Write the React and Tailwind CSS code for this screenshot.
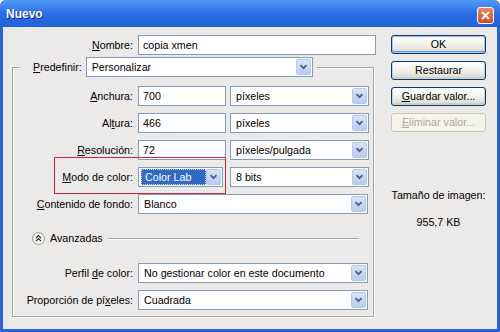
import React from 'react';

const Chevron = () => (
  <svg width="9" height="6" viewBox="0 0 9 6">
    <path d="M1.5 1.2 L4.5 4.2 L7.5 1.2" fill="none" stroke="#4D6185" strokeWidth="1.9" />
  </svg>
);

const Select = ({ value, className = '', selected }) => (
  <div className={`flex h-[20px] items-stretch border border-[#7F9DB9] bg-white p-px ${className}`}>
    <div className="flex flex-1 items-center min-w-0">
      {selected ? (
        <span className="ml-px flex h-[16px] flex-1 items-center border border-dotted border-[#C9D5EC] bg-[#316AC5] pl-[3px] text-white">
          {value}
        </span>
      ) : (
        <span className="pl-[4px] whitespace-nowrap">{value}</span>
      )}
    </div>
    <div className="flex w-[15px] items-center justify-center rounded-[2px] border border-[#B6C8EC] bg-linear-to-b from-[#D9E3FA] to-[#B8CBF2]">
      <Chevron />
    </div>
  </div>
);

const Input = ({ value, className = '' }) => (
  <div className={`flex h-[20px] items-center border border-[#7F9DB9] bg-white pl-[4px] ${className}`}>
    {value}
  </div>
);

const Label = ({ children }) => (
  <div className="w-[120px] shrink-0 text-right whitespace-nowrap">{children}</div>
);

const Row = ({ label, children }) => (
  <div className="flex h-[20px] items-center gap-[5px]">
    <Label>{label}</Label>
    {children}
  </div>
);

const XPButton = ({ children, def, disabled }) => {
  if (disabled) {
    return (
      <div className="flex h-[19px] items-center justify-center rounded-[3px] border border-[#C9C7BA] bg-[#F5F4EA] text-[#ACA899]">
        {children}
      </div>
    );
  }
  return (
    <div
      className={`flex h-[19px] items-center justify-center rounded-[3px] border border-[#003C74] bg-linear-to-b from-white via-[#F2F1EC] to-[#D8D7CF] ${
        def
          ? 'shadow-[inset_0_0_0_1px_#A7C2EE,inset_0_-1px_0_1px_#7A98DC]'
          : 'shadow-[inset_0_-1px_0_1px_#D2D0C6]'
      }`}
    >
      {children}
    </div>
  );
};

export default function App() {
  return (
    <div className="flex h-[332px] w-[500px] flex-col rounded-t-[6px] bg-[#2B62D6] font-['Liberation_Sans',Arial,sans-serif] text-[10.7px] text-black">
      {/* barra de título */}
      <div className="flex h-[27px] shrink-0 items-center justify-between rounded-t-[6px] bg-linear-to-b from-[#5299F6] via-[#2C6DE4] to-[#2260D6] pl-[6px] pr-[6px] pt-px">
        <span className="text-[12px] font-bold text-white [text-shadow:1px_1px_0_#0B2B8C]">Nuevo</span>
        <div className="mt-[2px] flex h-[17px] w-[17px] items-center justify-center rounded-[3px] border border-white bg-linear-to-b from-[#EA8663] to-[#CC4A25]">
          <svg width="9" height="9" viewBox="0 0 9 9">
            <path d="M1 1 L8 8 M8 1 L1 8" stroke="white" strokeWidth="1.8" />
          </svg>
        </div>
      </div>

      {/* cuerpo */}
      <div className="mx-[3px] mb-[3px] flex flex-1 gap-[15px] bg-[#ECEAE8] pl-[9px] pt-[8px]">
        <div className="flex w-[364px] flex-col">
          <div className="flex h-[20px] items-center gap-[5px]">
            <div className="w-[121px] text-right">
              <span className="underline">N</span>ombre:
            </div>
            <Input value="copia xmen" className="w-[238px]" />
          </div>

          <fieldset className="m-0 mt-[2px] w-[362px] border border-[#A5A4A0] px-0 pb-[6px] pt-[9px] shadow-[inset_1px_1px_0_#fff,1px_1px_0_#fff]">
            <legend className="ml-[7px] bg-[#ECEAE8] p-0">
              <div className="flex items-center gap-[4px] pl-[13px] pr-[3px]">
                <span>
                  <span className="underline">P</span>redefinir:
                </span>
                <Select value="Personalizar" className="w-[227px]" />
              </div>
            </legend>

            <div className="flex flex-col gap-[7px]">
              <Row label={<><span className="underline">A</span>nchura:</>}>
                <Input value="700" className="w-[88px]" />
                <Select value="píxeles" className="ml-[-1px] w-[139px]" />
              </Row>
              <Row label={<>Al<span className="underline">t</span>ura:</>}>
                <Input value="466" className="w-[88px]" />
                <Select value="píxeles" className="ml-[-1px] w-[139px]" />
              </Row>
              <Row label={<><span className="underline">R</span>esolución:</>}>
                <Input value="72" className="w-[88px]" />
                <Select value="píxeles/pulgada" className="ml-[-1px] w-[139px]" />
              </Row>
              <div className="relative">
                <Row label={<><span className="underline">M</span>odo de color:</>}>
                  <Select value="Color Lab" selected className="w-[85px]" />
                  <Select value="8 bits" className="ml-[2px] w-[139px]" />
                </Row>
                <div className="pointer-events-none absolute left-[41px] top-[-10px] h-[37px] w-[172px] border border-[#C8283C]" />
              </div>
              <Row label={<><span className="underline">C</span>ontenido de fondo:</>}>
                <Select value="Blanco" className="w-[230px]" />
              </Row>
            </div>

            <div className="ml-[19px] mr-[14px] mt-[16px] flex h-[16px] items-center">
              <svg width="13" height="13" viewBox="0 0 13 13">
                <circle cx="6.5" cy="6.5" r="6" fill="#F7F6F3" stroke="#9C9B98" />
                <path d="M4 6.2 L6.5 3.7 L9 6.2 M4 9.2 L6.5 6.7 L9 9.2" fill="none" stroke="#222" strokeWidth="1.2" />
              </svg>
              <span className="ml-[5px]">Avanzadas</span>
              <div className="ml-[5px] h-px flex-1 bg-[#A5A4A0] shadow-[0_1px_0_#fff]" />
            </div>

            <div className="mt-[17px] flex flex-col gap-[7px]">
              <Row label={<>Perfil <span className="underline">d</span>e color:</>}>
                <Select value="No gestionar color en este documento" className="w-[230px]" />
              </Row>
              <Row label={<>Proporción de pí<span className="underline">x</span>eles:</>}>
                <Select value="Cuadrada" className="w-[230px]" />
              </Row>
            </div>
          </fieldset>
        </div>

        <div className="flex w-[95px] flex-col">
          <div className="flex flex-col gap-[7px]">
            <XPButton def>OK</XPButton>
            <XPButton>Restaurar</XPButton>
            <XPButton>
              <span><span className="underline">G</span>uardar valor...</span>
            </XPButton>
            <XPButton disabled>
              <span><span className="underline">E</span>liminar valor...</span>
            </XPButton>
          </div>
          <div className="mt-[55px] flex justify-center whitespace-nowrap">Tamaño de imagen:</div>
          <div className="mt-[11px] flex justify-center whitespace-nowrap">955,7 KB</div>
        </div>
      </div>
    </div>
  );
}
